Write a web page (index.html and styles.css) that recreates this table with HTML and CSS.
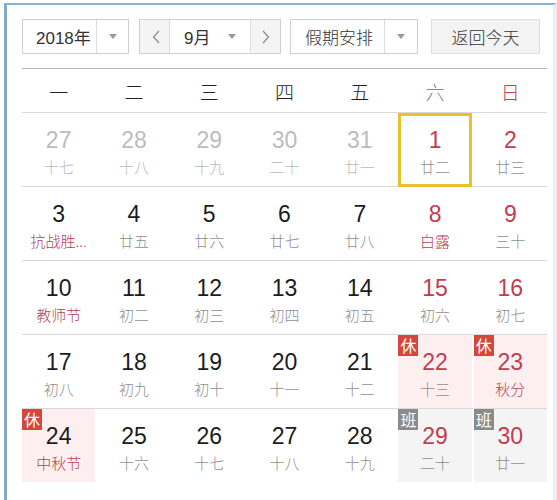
FILE: index.html
```html
<!DOCTYPE html>
<html lang="zh-CN">
<head>
<meta charset="utf-8">
<title>万年历</title>
<link rel="stylesheet" href="styles.css">
</head>
<body>
<div class="frame">
  <div class="toolbar">
    <div class="select year">
      <span class="sel-text">2018年</span>
      <span class="sel-arrow"><i class="tri"></i></span>
    </div>
    <div class="month-group">
      <span class="nav"><svg width="8" height="14" viewBox="0 0 8 14"><polyline points="7,1 1.5,7 7,13" fill="none" stroke="#8a8a8a" stroke-width="1.2"/></svg></span>
      <div class="month"><span>9月</span><i class="tri"></i></div>
      <span class="nav next"><svg width="8" height="14" viewBox="0 0 8 14"><polyline points="1,1 6.5,7 1,13" fill="none" stroke="#8a8a8a" stroke-width="1.2"/></svg></span>
    </div>
    <div class="select holiday">
      <span class="sel-text">假期安排</span>
      <span class="sel-arrow"><i class="tri"></i></span>
    </div>
    <div class="today">返回今天</div>
  </div>

  <div class="calendar">
    <div class="weekdays">
      <span>一</span><span>二</span><span>三</span><span>四</span><span>五</span><span class="sat">六</span><span class="sun">日</span>
    </div>

    <div class="week">
      <div class="cell other"><b>27</b><em>十七</em></div>
      <div class="cell other"><b>28</b><em>十八</em></div>
      <div class="cell other"><b>29</b><em>十九</em></div>
      <div class="cell other"><b>30</b><em>二十</em></div>
      <div class="cell other"><b>31</b><em>廿一</em></div>
      <div class="cell weekend selected"><b>1</b><em>廿二</em></div>
      <div class="cell weekend"><b>2</b><em>廿三</em></div>
    </div>

    <div class="week">
      <div class="cell"><b>3</b><em class="fest">抗战胜...</em></div>
      <div class="cell"><b>4</b><em>廿五</em></div>
      <div class="cell"><b>5</b><em>廿六</em></div>
      <div class="cell"><b>6</b><em>廿七</em></div>
      <div class="cell"><b>7</b><em>廿八</em></div>
      <div class="cell weekend"><b>8</b><em class="fest">白露</em></div>
      <div class="cell weekend"><b>9</b><em>三十</em></div>
    </div>

    <div class="week">
      <div class="cell"><b>10</b><em class="fest">教师节</em></div>
      <div class="cell"><b>11</b><em>初二</em></div>
      <div class="cell"><b>12</b><em>初三</em></div>
      <div class="cell"><b>13</b><em>初四</em></div>
      <div class="cell"><b>14</b><em>初五</em></div>
      <div class="cell weekend"><b>15</b><em>初六</em></div>
      <div class="cell weekend"><b>16</b><em>初七</em></div>
    </div>

    <div class="week">
      <div class="cell"><b>17</b><em>初八</em></div>
      <div class="cell"><b>18</b><em>初九</em></div>
      <div class="cell"><b>19</b><em>初十</em></div>
      <div class="cell"><b>20</b><em>十一</em></div>
      <div class="cell"><b>21</b><em>十二</em></div>
      <div class="cell weekend rest"><span class="badge">休</span><b>22</b><em>十三</em></div>
      <div class="cell weekend rest"><span class="badge">休</span><b>23</b><em class="fest">秋分</em></div>
    </div>

    <div class="week last">
      <div class="cell rest"><span class="badge">休</span><b>24</b><em class="fest">中秋节</em></div>
      <div class="cell"><b>25</b><em>十六</em></div>
      <div class="cell"><b>26</b><em>十七</em></div>
      <div class="cell"><b>27</b><em>十八</em></div>
      <div class="cell"><b>28</b><em>十九</em></div>
      <div class="cell weekend work"><span class="badge">班</span><b>29</b><em>二十</em></div>
      <div class="cell weekend work"><span class="badge">班</span><b>30</b><em>廿一</em></div>
    </div>
  </div>
</div>
</body>
</html>
```

FILE: styles.css
```css
* { box-sizing: border-box; }

html, body {
  margin: 0;
  padding: 0;
  background: #ffffff;
}

body {
  font-family: "Liberation Sans", "Noto Sans CJK SC", sans-serif;
  color: #333;
}

.frame {
  margin: 3px 0 0 4px;
  width: 553px;
  height: 497px;
  border-left: 3px solid #80a9cd;
  border-top: 2px solid #86b0d3;
  border-right: 4px solid #e8f0f7;
  padding: 14px 6px 0 15px;
  background: #fff;
}

/* ---------- toolbar ---------- */
.toolbar {
  display: flex;
  align-items: stretch;
  height: 35px;
  margin-bottom: 14px;
  font-size: 17px;
  color: #333;
}

.select {
  display: flex;
  border: 1px solid #cfcfcf;
  background: #fff;
}

.sel-text {
  display: flex;
  align-items: center;
  padding-left: 13px;
  flex: 1;
}

.holiday .sel-text,
.today {
  font-family: "Noto Sans CJK SC", sans-serif;
  font-weight: 300;
}

.sel-arrow {
  display: flex;
  align-items: center;
  justify-content: center;
  width: 32px;
  border-left: 1px solid #dcdcdc;
}

.tri {
  display: block;
  width: 0;
  height: 0;
  border-left: 4.5px solid transparent;
  border-right: 4.5px solid transparent;
  border-top: 5px solid #9a9a9a;
}

.year { width: 107px; }

.month-group {
  display: flex;
  width: 142px;
  margin-left: 10px;
  border: 1px solid #cfcfcf;
}

.nav {
  display: flex;
  align-items: center;
  justify-content: center;
  width: 30px;
  background: #f4f4f4;
  border-right: 1px solid #dcdcdc;
  padding-left: 2px;
}

.nav.next {
  border-right: none;
  border-left: 1px solid #dcdcdc;
  padding-left: 0;
}

.month {
  flex: 1;
  display: flex;
  align-items: center;
  justify-content: space-between;
  padding: 0 14px 0 14px;
  background: #fff;
}

.holiday {
  width: 128px;
  margin-left: 9px;
}

.holiday .sel-text { padding-left: 14px; }
.holiday .sel-arrow { width: 33px; }

.today {
  width: 109px;
  margin-left: 13px;
  display: flex;
  align-items: center;
  justify-content: center;
  border: 1px solid #dedede;
  background: #f3f3f3;
  color: #333;
}

/* ---------- calendar ---------- */
.calendar {
  border-top: 1px solid #b3b8bd;
}

.weekdays {
  display: grid;
  grid-template-columns: repeat(7, 1fr);
  column-gap: 2px;
  height: 44px;
  align-items: center;
  border-bottom: 1px solid #dadada;
  font-family: "Noto Sans CJK SC", sans-serif;
  font-weight: 300;
  font-size: 19px;
  color: #222;
}

.weekdays span {
  text-align: center;
  line-height: 44px;
  padding-top: 1px;
}

.weekdays .sat { color: #9c8088; }
.weekdays .sun { color: #c2404f; }

.week {
  display: grid;
  grid-template-columns: repeat(7, 1fr);
  column-gap: 2px;
  height: 74px;
  border-bottom: 1px solid #dadada;
}

.week.last {
  border-bottom: none;
  height: 73px;
}

.cell {
  position: relative;
  display: flex;
  flex-direction: column;
  align-items: center;
  padding-top: 14px;
}

.cell b {
  font-family: "Liberation Sans", sans-serif;
  font-weight: normal;
  font-size: 23px;
  line-height: 26px;
  color: #1c1c1c;
}

.cell em {
  font-style: normal;
  font-family: "Noto Sans CJK SC", sans-serif;
  font-weight: 300;
  font-size: 15px;
  line-height: 20px;
  margin-top: 4px;
  color: #8f8f8f;
  white-space: nowrap;
}

.cell.other b { color: #bcbcbc; }
.cell.other em { color: #b8b8b8; }

.cell.weekend b { color: #c23c4f; }

.cell em.fest { color: #b8404f; }

.cell.selected {
  border: 3px solid #e8c22e;
  padding-top: 11px;
  margin-bottom: -1px;
}

.cell.rest { background: #fdeff0; }
.cell.work { background: #f4f4f4; }

.badge {
  position: absolute;
  top: 0;
  left: 0;
  width: 20px;
  height: 21px;
  background: #d5473b;
  color: #fff;
  font-family: "Noto Sans CJK SC", sans-serif;
  font-size: 16px;
  line-height: 20px;
  text-align: center;
}

.work .badge { background: #8b8b8b; }
```
